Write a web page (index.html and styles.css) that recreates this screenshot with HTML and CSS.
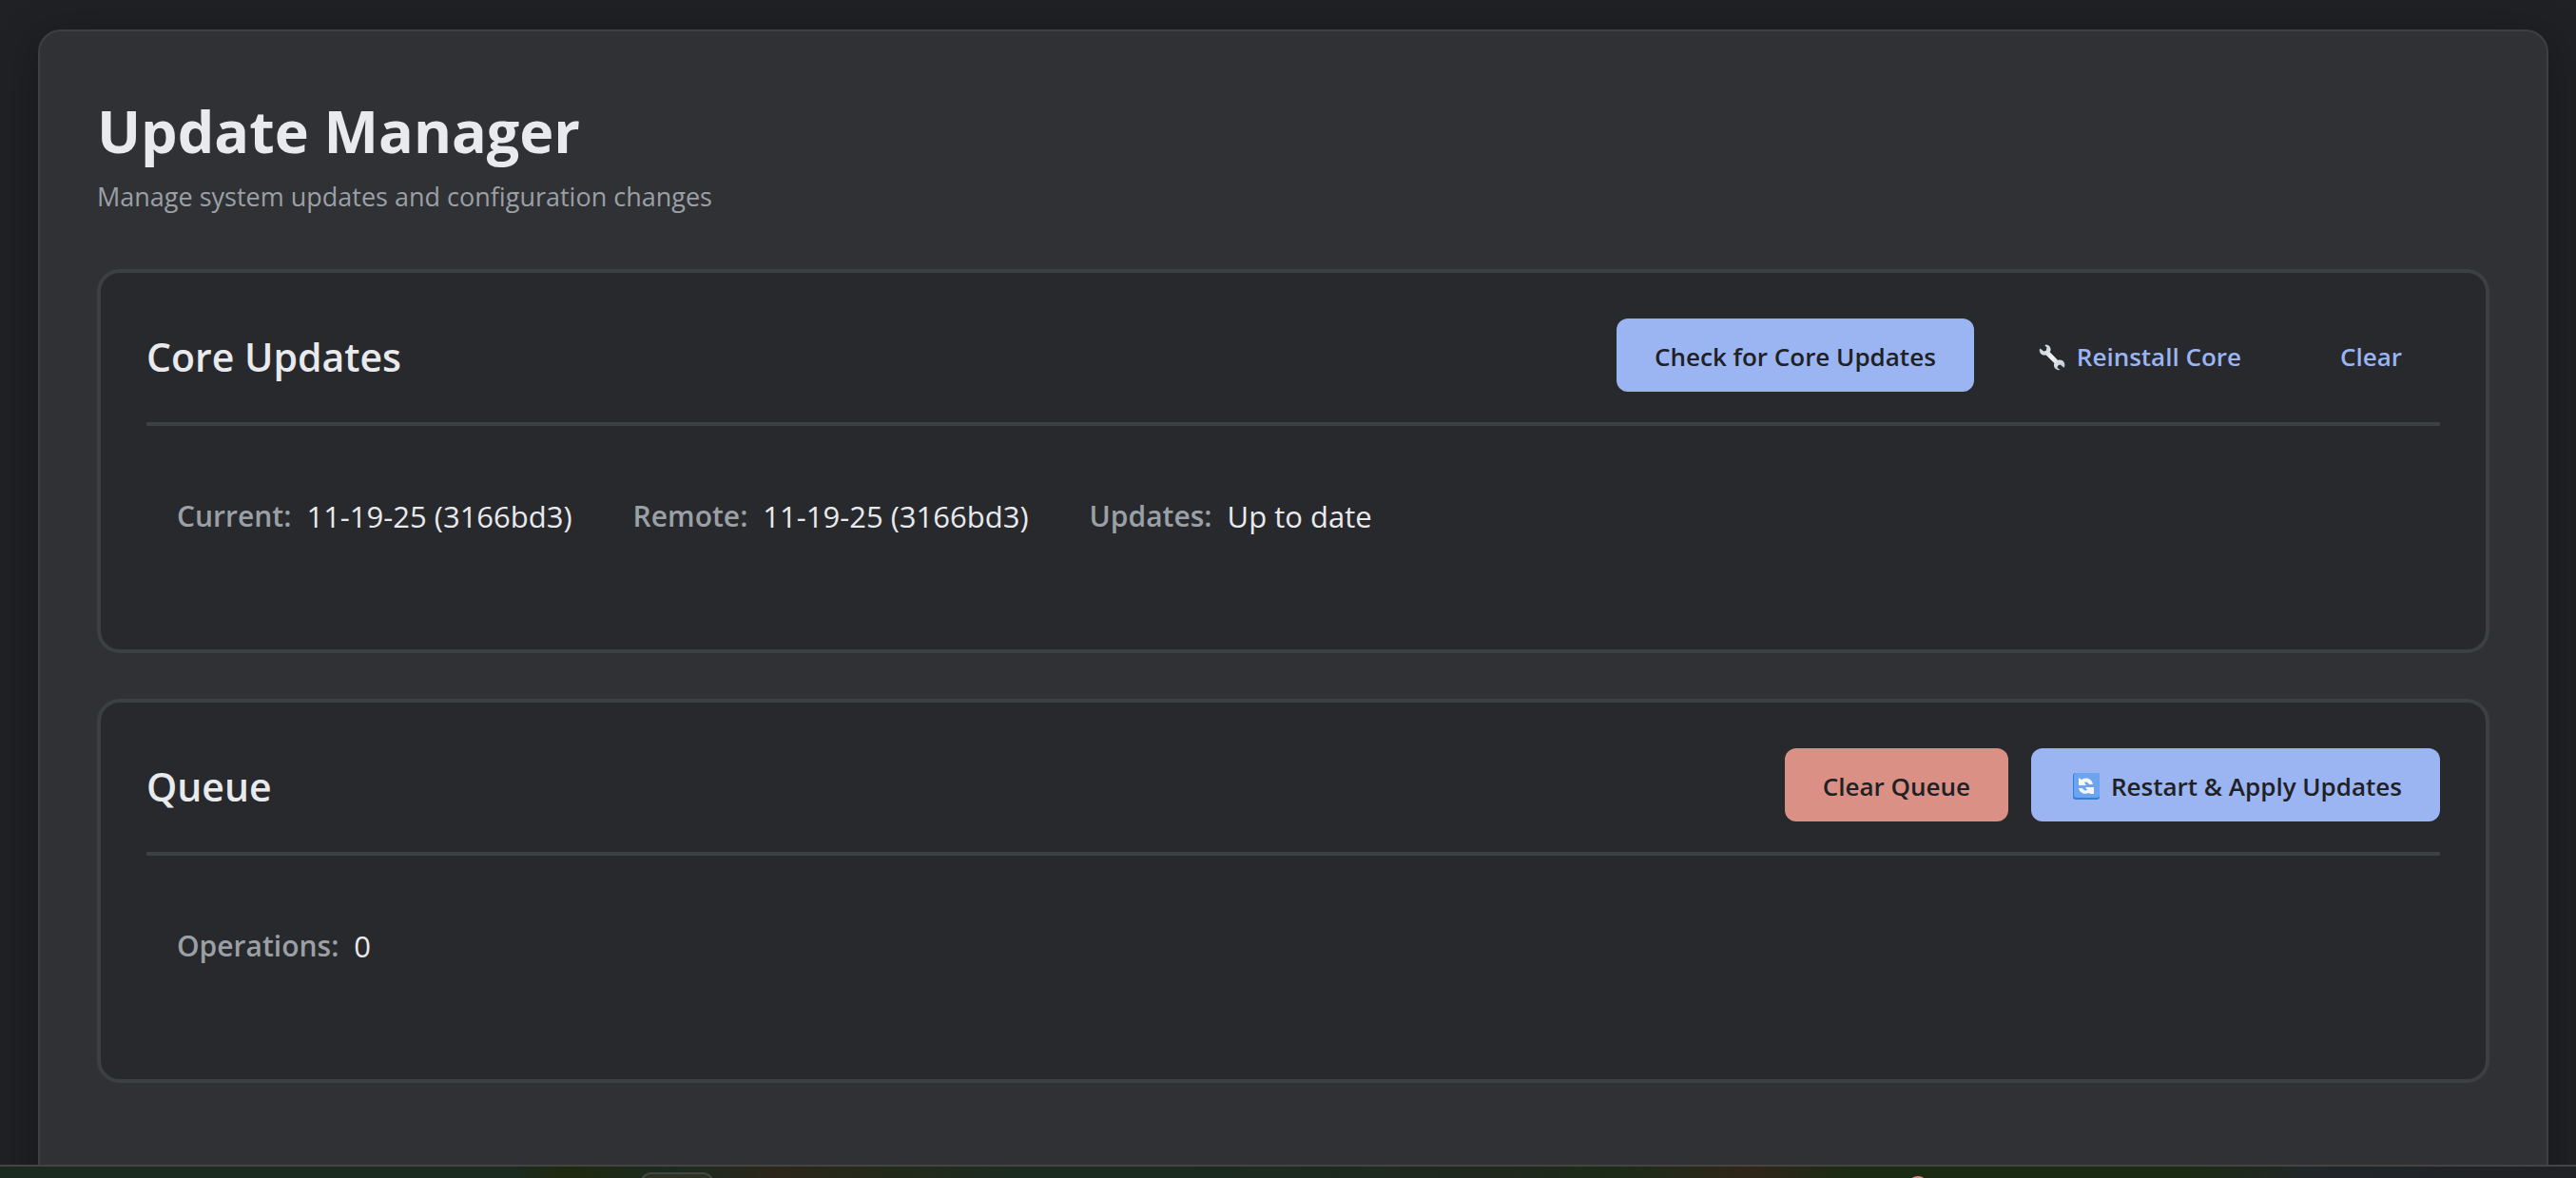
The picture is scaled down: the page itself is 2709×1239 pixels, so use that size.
FILE: index.html
```html
<!DOCTYPE html>
<html lang="en">
<head>
  <meta charset="UTF-8" />
  <meta name="viewport" content="width=device-width, initial-scale=1" />
  <title>Update Manager</title>
  <link rel="stylesheet" href="styles.css">
</head>
<body>

  <main class="panel">
    <header class="page-header">
      <h1>Update Manager</h1>
      <p>Manage system updates and configuration changes</p>
    </header>

    <section class="card">
      <div class="card-header">
        <h2>Core Updates</h2>
        <div class="actions">
          <button type="button" class="btn btn-primary">Check for Core Updates</button>
          <button type="button" class="btn btn-text">
            <svg class="icon" viewBox="-6 -6 46 46" aria-hidden="true">
              <defs>
                <linearGradient id="steel" x1="0" y1="0" x2="1" y2="1">
                  <stop offset="0" stop-color="#b9c5cc" />
                  <stop offset="0.5" stop-color="#f2f5f7" />
                  <stop offset="1" stop-color="#b3c0c8" />
                </linearGradient>
              </defs>
              <path fill="url(#steel)" d="M9 1c4 0 7 4 6 8l-1 2 11 11c5-2 10 2 9 8l-1 2-5-4-3 1-1 3 4 3c-6 1-10-4-8-9L9 15c-5 1-9-2-9-7l1-2 5 4 3-1 1-4-3-3z" />
            </svg>
            Reinstall Core
          </button>
          <button type="button" class="btn btn-text">Clear</button>
        </div>
      </div>
      <dl class="status">
        <div><dt>Current:</dt><dd>11-19-25 (3166bd3)</dd></div>
        <div><dt>Remote:</dt><dd>11-19-25 (3166bd3)</dd></div>
        <div><dt>Updates:</dt><dd>Up to date</dd></div>
      </dl>
    </section>

    <section class="card">
      <div class="card-header">
        <h2>Queue</h2>
        <div class="actions">
          <button type="button" class="btn btn-danger">Clear Queue</button>
          <button type="button" class="btn btn-primary">
            <svg class="icon" viewBox="0 0 36 36" aria-hidden="true">
              <rect x="4" y="4" width="28" height="28" rx="3" fill="#2f80d8" />
              <rect x="5" y="4" width="27" height="26" rx="3" fill="#6ca4ef" />
              <path fill="#f3f5f8" d="M10 9l3 2c5-3 11-1 12 5h-4c-1-2-3-3-5-2l2 3h-8zM26 26h-4l-1-1c-5 2-10 0-11-5h4c1 2 3 3 5 2l-2-3h9z" />
            </svg>
            Restart &amp; Apply Updates
          </button>
        </div>
      </div>
      <dl class="status">
        <div><dt>Operations:</dt><dd>0</dd></div>
      </dl>
    </section>
  </main>

  <footer class="dock">
    <span class="dock-tab"></span>
    <span class="dock-badge"></span>
  </footer>

</body>
</html>
```

FILE: styles.css
```css
/* Base Styles */
* {
  box-sizing: border-box;
}

body {
  margin: 0;
  height: 100vh;
  overflow: hidden;
  font-family: 'Segoe UI', 'Open Sans', sans-serif;
  background: #202124;
  color: #e8eaed;
}

.panel {
  min-height: 100vh;
  margin: 31px 29px 0 40px;
  padding: 60px;
  background: #303134;
  border: 2px solid #3c4043;
  border-radius: 24px;
  box-shadow: 0 8px 48px rgba(0, 0, 0, 0.3);
}

.page-header {
  margin-bottom: 52px;
}

h1 {
  margin: 0;
  font-size: 61px;
  line-height: 90px;
  font-weight: 700;
}

.page-header p {
  margin: 0;
  font-size: 27px;
  line-height: 48px;
  color: #9aa0a6;
}

/* Cards */
.card {
  margin-bottom: 48px;
  padding: 48px;
  background: #28292c;
  border: 4px solid #3c4043;
  border-radius: 24px;
}

.card-header {
  display: flex;
  justify-content: space-between;
  align-items: center;
  padding-bottom: 32px;
  border-bottom: 4px solid #3c4043;
}

h2 {
  margin: 0;
  padding-top: 2px;
  font-size: 41px;
  line-height: 60px;
  font-weight: 600;
}

/* Buttons */
.actions {
  display: flex;
  gap: 24px;
}

.btn {
  display: flex;
  align-items: center;
  gap: 8px;
  height: 77px;
  padding: 2px 40px 0;
  border: none;
  border-radius: 12px;
  font-family: inherit;
  font-size: 26px;
  font-weight: 600;
  color: #202124;
  cursor: pointer;
}

.btn-primary {
  background: #9bb4f2;
}

.btn-danger {
  background: #db9086;
}

.btn-text {
  background: transparent;
  color: #9bb4f2;
}

.icon {
  width: 36px;
  height: 36px;
}

/* Status row */
.status {
  display: flex;
  gap: 64px;
  margin: 32px 0 29px;
  padding: 32px;
  font-size: 31px;
  line-height: 62px;
}

.status div {
  display: flex;
  gap: 16px;
}

.status dt {
  font-size: 30px;
  font-weight: 600;
  color: #9aa0a6;
}

.status dd {
  margin: 0;
}

/* Bottom dock */
.dock {
  position: fixed;
  left: 0;
  right: 0;
  bottom: 0;
  height: 14px;
  overflow: hidden;
  border-top: 2px solid #444541;
  background: linear-gradient(to right, #1b2b21 0%, #1b2b21 20%, #20290f 22%, #1b2b21 26%, #2b251a 30%, #242919 34%, #1b2b21 40%, #1b2b21 46%, #20281e 58%, #1d2b18 63%, #2f2519 68%, #1c2b14 72%, #1c2b14 85%, #22262a 90%, #202124 100%);
}

.dock-tab {
  position: absolute;
  left: 673px;
  top: 6px;
  width: 78px;
  height: 24px;
  background: #2d3225;
  border: 2px solid #444541;
  border-radius: 12px;
}

.dock-badge {
  position: absolute;
  left: 2006px;
  top: 10px;
  width: 22px;
  height: 22px;
  border-radius: 50%;
  background: #db9086;
}
```
